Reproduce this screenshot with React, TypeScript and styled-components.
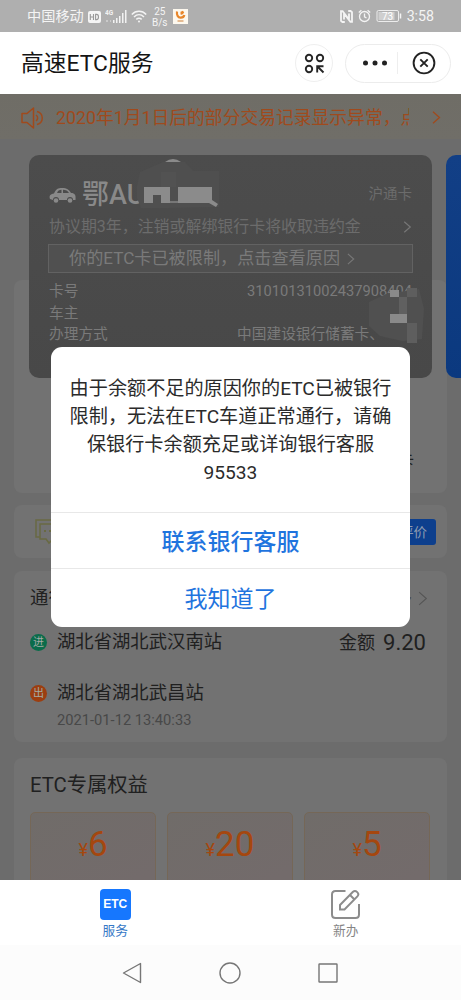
import React from "react";
import styled, { createGlobalStyle } from "styled-components";

const Global = createGlobalStyle`
  * { box-sizing: border-box; }
  body { margin: 0; background: #fff; font-family: Roboto, "Noto Sans CJK SC", sans-serif; }
  svg { display: block; flex: none; }
`;

const Screen = styled.div`
  position: relative;
  width: 461px;
  height: 1000px;
  overflow: hidden;
  display: flex;
  flex-direction: column;
`;

const StatusBar = styled.div`
  height: 32px;
  flex: none;
  background: #afafaf;
  color: #f4f4f4;
  display: flex;
  align-items: center;
  justify-content: space-between;
  padding: 1px 27px 0 27px;
`;

const StatusGroup = styled.div<{ $gap: number }>`
  display: flex;
  align-items: center;
  gap: ${(p) => p.$gap}px;
`;

const Text = styled.span<{ $size: number; $color?: string; $weight?: number; $lh?: number }>`
  font-size: ${(p) => p.$size}px;
  color: ${(p) => p.$color ?? "inherit"};
  font-weight: ${(p) => p.$weight ?? 400};
  line-height: ${(p) => (p.$lh ? `${p.$lh}px` : "1")};
  white-space: nowrap;
`;

const Speed = styled.div`
  font-size: 10px;
  line-height: 11px;
  text-align: center;
  width: 16px;
  margin: 0 1px 0 1px;
`;

const Header = styled.header`
  height: 62px;
  flex: none;
  background: #fff;
  display: flex;
  align-items: center;
  padding: 0 10px 0 21px;
`;

const Title = styled.h1`
  margin: 2px auto 0 0;
  font-size: 22.8px;
  line-height: 30px;
  font-weight: 400;
  color: #141414;
`;

const RoundButton = styled.div`
  width: 38px;
  height: 38px;
  border: 1px solid #efefef;
  border-radius: 50%;
  display: flex;
  align-items: center;
  justify-content: center;
  margin-right: 12px;
`;

const Capsule = styled.div`
  width: 106px;
  height: 39px;
  border: 1px solid #ececec;
  border-radius: 20px;
  display: flex;
  align-items: center;
`;

const CapsuleHalf = styled.div<{ $line?: boolean }>`
  width: 52px;
  height: 22px;
  display: flex;
  align-items: center;
  justify-content: center;
  padding-left: ${(p) => (p.$line ? 6 : 0)}px;
  border-right: ${(p) => (p.$line ? "1px solid #eee" : "0")};
`;

const Content = styled.main`
  height: 786px;
  flex: none;
  overflow: hidden;
  background: #6c6c6c;
`;

const Notice = styled.div`
  height: 45px;
  background: linear-gradient(#6f6d66, #706e68);
  color: #a04a1c;
  display: flex;
  align-items: center;
  padding: 2px 20px 0 21px;
`;

const NoticeText = styled.div`
  width: 353px;
  margin-left: 12px;
  overflow: hidden;
  white-space: nowrap;
  font-size: 17.8px;
  line-height: 26px;
`;

const NoticeArrow = styled.div`
  margin-left: auto;
`;

const Cards = styled.div`
  position: relative;
  z-index: 1;
  margin-top: 16px;
  padding-left: 29px;
  display: flex;
  gap: 14px;
`;

const EtcCard = styled.section`
  position: relative;
  flex: none;
  width: 403px;
  height: 223px;
  border-radius: 10px;
  background: linear-gradient(#4c4c4c, #484848);
  color: #7a7a7a;
  padding: 23px 20px 0 20px;
`;

const NextCard = styled.div`
  flex: none;
  width: 60px;
  height: 223px;
  border-radius: 10px;
  background: linear-gradient(#123f86, #0b397f);
`;

const Row = styled.div<{ $h: number }>`
  height: ${(p) => p.$h}px;
  display: flex;
  align-items: center;
  justify-content: space-between;
`;

const Plate = styled.div`
  display: flex;
  align-items: center;
  gap: 6px;
  color: #898989;
`;

const Restricted = styled.div`
  height: 29px;
  margin: 3px -1px 8px;
  border: 1px solid #626262;
  background: #505050;
  display: flex;
  align-items: center;
  gap: 7px;
  padding-left: 20px;
`;

const BankName = styled.div`
  display: flex;
  padding-right: 28px;
`;

const Smudge = styled.svg<{ $x: number; $y: number }>`
  position: absolute;
  left: ${(p) => p.$x}px;
  top: ${(p) => p.$y}px;
`;

const Panel = styled.section<{ $top: number; $h: number }>`
  margin: ${(p) => p.$top}px 14px 0 14px;
  height: ${(p) => p.$h}px;
  border-radius: 8px;
  background: #727272;
  color: #202020;
  padding: 0 16px;
  overflow: hidden;
`;

const CardTail = styled.div`
  padding: 171px 17px 0 0;
  text-align: right;
`;

const RateButton = styled.div`
  width: 70px;
  height: 26px;
  margin-right: -5px;
  border-radius: 3px;
  background: #0d3f8d;
  color: #8c9ab0;
  display: flex;
  align-items: center;
  justify-content: flex-end;
  padding: 3px 9px 0 0;
`;

const More = styled.div`
  display: flex;
  align-items: center;
  gap: 6px;
  padding-right: 3px;
  color: #4d4d4d;
`;

const Stop = styled.div`
  display: flex;
  align-items: center;
  gap: 10px;
`;

const Badge = styled.span<{ $bg: string }>`
  width: 17px;
  height: 17px;
  border-radius: 50%;
  background: ${(p) => p.$bg};
  color: #a3aaa5;
  font-size: 11px;
  line-height: 17px;
  text-align: center;
  margin-top: 1px;
`;

const Amount = styled.div`
  display: flex;
  align-items: center;
  gap: 8px;
  padding: 1px 5px 0 0;
`;

const DateLine = styled.div`
  padding-left: 27px;
  color: #484848;
  font-size: 14.7px;
  line-height: 20px;
  margin-top: -17px;
`;

const Coupons = styled.div`
  display: flex;
  gap: 11px;
`;

const Coupon = styled.div`
  width: 126px;
  height: 90px;
  flex: none;
  border: 1px solid #756757;
  border-radius: 5px 5px 0 0;
  background: linear-gradient(150deg, #706c69, #736b6b 80%);
  color: #a5470f;
  display: flex;
  justify-content: center;
  align-items: baseline;
  padding-top: 11px;
`;

const Dialog = styled.div`
  position: absolute;
  z-index: 5;
  left: 51px;
  top: 347px;
  width: 359px;
  height: 280px;
  border-radius: 11px;
  background: #fff;
`;

const Message = styled.p`
  margin: 0;
  height: 165px;
  padding-top: 28px;
  font-size: 19.15px;
  line-height: 28px;
  text-align: center;
  white-space: nowrap;
  color: #2b2b2b;
`;

const Action = styled.div<{ $weight: number; $h: number }>`
  height: ${(p) => p.$h}px;
  border-top: 1px solid #e8e8e8;
  display: flex;
  align-items: center;
  justify-content: center;
  padding-bottom: 2px;
  font-size: 23px;
  font-weight: ${(p) => p.$weight};
  color: #1f74de;
`;

const Tabs = styled.nav`
  height: 65px;
  flex: none;
  background: #fff;
  display: flex;
`;

const Tab = styled.div<{ $color: string }>`
  flex: 1;
  display: flex;
  flex-direction: column;
  align-items: center;
  padding-top: 9px;
  gap: 2px;
  color: ${(p) => p.$color};
`;

const EtcIcon = styled.div`
  width: 31px;
  height: 31px;
  border-radius: 4px;
  background: #1677fe;
  color: #fff;
  font: bold 12px/31px "Liberation Sans", sans-serif;
  text-align: center;
`;

const SystemNav = styled.div`
  height: 55px;
  flex: none;
  background: #fcfcfc;
  display: flex;
  justify-content: center;
  gap: 76px;
  padding: 17px 1px 0 0;
`;

const Chevron = ({ color, w = 9, h = 13, sw = 1.3 }: { color: string; w?: number; h?: number; sw?: number }) => (
  <svg width={w} height={h} viewBox="0 0 9 13" fill="none" stroke={color} strokeWidth={sw}>
    <path d="M1 .8 7.5 6.5 1 12.2" />
  </svg>
);

export default function App() {
  return (
    <Screen>
      <Global />
      <StatusBar>
        <StatusGroup $gap={4}>
          <Text $size={14.2}>中国移动</Text>
          <svg width="13" height="12" viewBox="0 0 13 12">
            <rect width="13" height="12" rx="2" fill="#f4f4f4" />
            <path d="M2.3 3v6M5.5 3v6M2.3 6h3.2M7.6 3.4v5.2h1c2.5 0 2.5-5.2 0-5.2z" fill="none" stroke="#999" strokeWidth="1.1" />
          </svg>
          <svg width="22" height="15" viewBox="0 0 22 15" fill="#f2f2f2">
            <text x="0" y="6" fontSize="6.5" fontWeight="700" fontFamily="Roboto">4G</text>
            <path d="M8 11h1.500v3H8zM11 9h1.500v5H11zM14 7h1.500v7H14zM17 4h1.500v10H17zM20 1h1.500v13H20z" />
            <path d="M1 11h2v2H1zM5 11h1v2H5z" opacity=".4" />
          </svg>
          <svg width="16" height="13" viewBox="0 0 16 13" fill="none" stroke="#f4f4f4" strokeWidth="1.5">
            <path d="M.8 4.4c4-4.2 10.400-4.200 14.400 0M3 7c3-2.900 7-2.900 10 0M5.300 9.400c1.800-1.600 3.600-1.600 5.400 0" />
            <circle cx="8" cy="11.500" r="1" fill="#f4f4f4" stroke="none" />
          </svg>
          <Speed>25<br />B/s</Speed>
          <svg width="15" height="15" viewBox="0 0 15 15">
            <rect width="15" height="15" fill="#fdf8ee" />
            <path d="M4 2.500c-.5 3.500 1 6 3.500 6.200 2.500.1 3.500-1.200 3.800-2.700" fill="none" stroke="#e8862a" strokeWidth="2.200" />
            <path d="M7.500 5.500V2.800L10 1.800l1.200 2L9 5.800z" fill="#e8862a" />
            <path d="M4.500 12h6" stroke="#d99a60" strokeWidth="1.300" />
          </svg>
        </StatusGroup>
        <StatusGroup $gap={5}>
          <svg width="13" height="13" viewBox="0 0 13 13" fill="none" stroke="#f4f4f4" strokeWidth="1.800">
            <path d="M4.800 12H2.400L1 10.800V1.200h1.600L9 9.500V3.500M8.200 1h2.400L12 2.200v9.600h-1.600L4 3.500v6" />
          </svg>
          <svg width="13" height="14" viewBox="0 0 13 14" fill="none" stroke="#f4f4f4" strokeWidth="1.300">
            <circle cx="6.500" cy="7.500" r="5" />
            <path d="M6.500 4.500v3.300l2 1.200M.8 3.400 3.400 1.200M12.200 3.400 9.600 1.200" />
          </svg>
          <svg width="26" height="12" viewBox="0 0 26 12">
            <rect x="1" y=".5" width="21.500" height="11" rx="1.500" fill="none" stroke="#ececec" />
            <rect x="2.500" y="2" width="16" height="8" fill="#cfcfcf" />
            <text x="6" y="9.500" fontSize="10" fill="#fff" fontFamily="Roboto">73</text>
            <path d="M24.500 3.500v5" stroke="#f4f4f4" strokeWidth="1.500" />
          </svg>
          <Text $size={14.2}>3:58</Text>
        </StatusGroup>
      </StatusBar>

      <Header>
        <Title>高速ETC服务</Title>
        <RoundButton>
          <svg width="21" height="21" viewBox="0 0 21 21" fill="none" stroke="#262626" strokeWidth="1.900">
            <circle cx="5" cy="5" r="3.200" /><circle cx="16" cy="5" r="3.200" /><circle cx="5" cy="16" r="3.200" />
            <path d="M13.200 19.500v-6.300h6.300M13.500 13.500l6 6" />
          </svg>
        </RoundButton>
        <Capsule>
          <CapsuleHalf $line>
            <svg width="26" height="6" viewBox="0 0 26 6" fill="#222">
              <circle cx="3.500" cy="3" r="2.500" /><circle cx="13" cy="3" r="2.500" /><circle cx="22.500" cy="3" r="2.500" />
            </svg>
          </CapsuleHalf>
          <CapsuleHalf>
            <svg width="24" height="24" viewBox="0 0 24 24" fill="none" stroke="#222" strokeWidth="1.900">
              <circle cx="12" cy="12" r="10.400" /><path d="m8.300 8.300 7.400 7.400m0-7.400-7.400 7.400" />
            </svg>
          </CapsuleHalf>
        </Capsule>
      </Header>

      <Content>
        <Notice>
          <svg width="23" height="24" viewBox="0 0 23 24" fill="none" stroke="#a04a1c" strokeWidth="1.500" strokeLinejoin="round">
            <path d="M1 7.500h5L12.500 2v20L6 16.500H1zM15 9c2.200 1.500 2.200 4.500 0 6M16 5.500c7 2 7 11 0 13" />
          </svg>
          <NoticeText>2020年1月1日后的部分交易记录显示异常，点</NoticeText>
          <NoticeArrow><Chevron color="#a04a1c" /></NoticeArrow>
        </Notice>

        <Cards>
          <EtcCard>
            <Row $h={34}>
              <Plate>
                <svg width="27" height="17" viewBox="0 0 27 17">
                  <path fillRule="evenodd" fill="#898989" d="M1 12c-1-3 0-5 4-5.500C7 2 9 1 13 1c5 0 7 1.500 9 5 4 0 5 2 4.500 7H24a3 3 0 0 0-6 0H10a3 3 0 0 0-6 0zM8 6h4.500V2.800C10 2.800 9 3.500 8 6m6 0h6c-1.500-2.500-3-3.200-6-3.200z" />
                  <circle cx="7" cy="13.500" r="2.300" fill="#898989" /><circle cx="21" cy="13.500" r="2.300" fill="#898989" />
                </svg>
                <Text $size={27} $weight={500}>鄂AU</Text>
              </Plate>
              <Text $size={14.5} $color="#6c6c6c">沪通卡</Text>
            </Row>
            <Row $h={29}>
              <Text $size={15.95} $color="#6c6c6c">协议期3年，注销或解绑银行卡将收取违约金</Text>
              <Chevron color="#777" w={9} h={12} />
            </Row>
            <Restricted>
              <Text $size={17.15} $color="#7a7a7a">你的ETC卡已被限制，点击查看原因</Text>
              <Chevron color="#777" w={8} h={12} />
            </Restricted>
            <Row $h={21.3}>
              <Text $size={14.7}>卡号</Text>
              <Text $size={14.7}>31010131002437908404</Text>
            </Row>
            <Row $h={21.3}>
              <Text $size={14.7}>车主</Text>
            </Row>
            <Row $h={21.3}>
              <Text $size={14.7}>办理方式</Text>
              <BankName><Text $size={14.7}>中国建设银行储蓄卡、</Text></BankName>
            </Row>
            <Smudge $x={106} $y={3} width="84" height="60" viewBox="0 0 84 60">
              <path d="M2 28 5 14 28 4h22l8 9h26v36l-50 1-28 0-4-10z" fill="#4f4f4f" />
              <path d="M30 4q8-6 16 0z" fill="#8a8a8a" />
              <path d="M9 29h26v16h-9v-8h-8v8H9zM43 29h34v13l6 4-2 3-7-4H43z" fill="#8b8b8b" />
              <path d="M35 43h8v2h-8z" fill="#777" />
              <path d="M26 14h15v15H26z" fill="#525252" />
            </Smudge>
            <Smudge $x={337} $y={132} width="60" height="58" viewBox="0 0 60 58">
              <path d="M3 15 20 7l33-5 5 20-2 30-20 2L14 49 3 39z" fill="#505050" />
              <path d="M33 10h8v17h-8z" fill="#606060" />
              <path d="M24 3h9v7h-9zM24 27h17v9H24z" fill="#8a8a8a" />
              <path d="M41 1h10v9H41zM41 36h10v20H41z" fill="#5e5e5e" />
            </Smudge>
          </EtcCard>
          <NextCard />
        </Cards>

        <Panel $top={-98} $h={213}>
          <CardTail><Text $size={16}>储蓄卡</Text></CardTail>
        </Panel>

        <Panel $top={12} $h={53}>
          <Row $h={53}>
            <svg width="35" height="26" viewBox="-5 0 35 26" fill="none" stroke="#696a43" strokeWidth="1.500">
              <path d="M5 18H1V1h22v4M5 5h24v15H18l-4 4-3-4H5z" />
              <path d="M9 12h2M14 12h2M19 12h2" strokeWidth="2" />
            </svg>
            <RateButton><Text $size={13.5}>去评价</Text></RateButton>
          </Row>
        </Panel>

        <Panel $top={13} $h={171}>
          <Row $h={55}>
            <Text $size={18.4}>通行记录</Text>
            <More><Text $size={15}>更多</Text><Chevron color="#555" w={10} h={15} sw={1} /></More>
          </Row>
          <Row $h={32}>
            <Stop><Badge $bg="#0b6c4b">进</Badge><Text $size={18.35} $lh={22}>湖北省湖北武汉南站</Text></Stop>
            <Amount><Text $size={18}>金额</Text><Text $size={22}>9.20</Text></Amount>
          </Row>
          <Row $h={69}>
            <Stop><Badge $bg="#9c3e10">出</Badge><Text $size={18.35} $lh={22}>湖北省湖北武昌站</Text></Stop>
          </Row>
          <DateLine>2021-01-12 13:40:33</DateLine>
        </Panel>

        <Panel $top={16} $h={150}>
          <Row $h={54}><Text $size={20.3}>ETC专属权益</Text></Row>
          <Coupons>
            {["6", "20", "5"].map((v) => (
              <Coupon key={v}><Text $size={18}>¥</Text><Text $size={35} $lh={42}>{v}</Text></Coupon>
            ))}
          </Coupons>
        </Panel>
      </Content>

      <Tabs>
        <Tab $color="#3478c6">
          <EtcIcon>ETC</EtcIcon>
          <Text $size={12.700} $lh={18}>服务</Text>
        </Tab>
        <Tab $color="#858585">
          <svg width="31" height="31" viewBox="0 0 31 31" fill="none" stroke="#8c8c8c" strokeWidth="2">
            <path d="M15.500 2H5.500Q2 2 2 5.500v20Q2 29 5.500 29h20q3.500 0 3.500-3.500V15" />
            <path d="M10 16 23 2.800q2-1.800 4.200.3 2.200 2.200.2 4.300L14.500 20.500H10zM20 6l4.500 4.500" />
          </svg>
          <Text $size={12.700} $lh={18}>新办</Text>
        </Tab>
      </Tabs>
      <SystemNav>
        <svg width="22" height="22" viewBox="0 0 22 22" fill="none" stroke="#767676" strokeWidth="1.400" strokeLinejoin="round">
          <path d="M19.500 1.500v19L2.500 11z" />
        </svg>
        <svg width="22" height="22" viewBox="0 0 22 22" fill="none" stroke="#767676" strokeWidth="1.400">
          <circle cx="11" cy="11" r="10" />
        </svg>
        <svg width="22" height="22" viewBox="0 0 22 22" fill="none" stroke="#767676" strokeWidth="1.400">
          <rect x="2" y="2" width="18" height="18" rx=".5" />
        </svg>
      </SystemNav>

      <Dialog>
        <Message>
          由于余额不足的原因你的ETC已被银行<br />
          限制，无法在ETC车道正常通行，请确<br />
          保银行卡余额充足或详询银行客服<br />
          95533
        </Message>
        <Action $weight={500} $h={56}>联系银行客服</Action>
        <Action $weight={400} $h={59}>我知道了</Action>
      </Dialog>
    </Screen>
  );
}
